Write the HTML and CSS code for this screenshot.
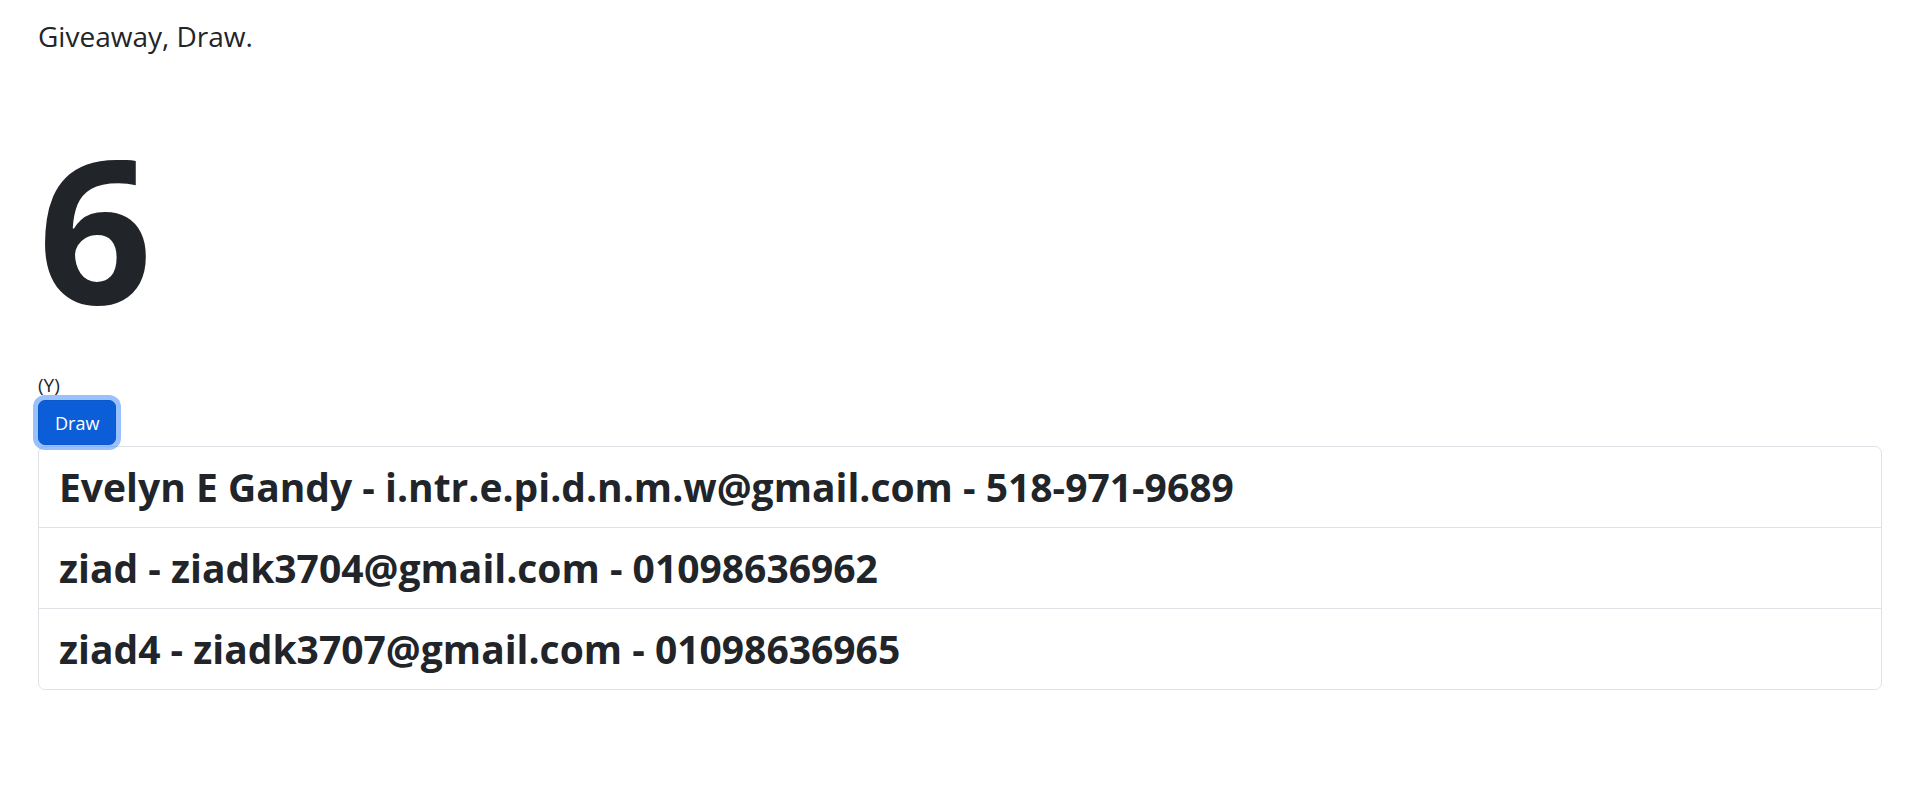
FILE: index.html
```html
<!DOCTYPE html>
<html lang="en">
<head>
<meta charset="utf-8">
<title>Giveaway</title>
<link rel="stylesheet" href="styles.css">
</head>
<body>
<div class="page">
  <div class="title">Giveaway, Draw.</div>
  <div class="count">6</div>
  <div class="hint">(Y)</div>
  <button class="btn-draw" type="button">Draw</button>
  <ul class="entries">
    <li class="entry">Evelyn E Gandy - i.ntr.e.pi.d.n.m.w@gmail.com - 518-971-9689</li>
    <li class="entry">ziad - ziadk3704@gmail.com - 01098636962</li>
    <li class="entry">ziad4 - ziadk3707@gmail.com - 01098636965</li>
  </ul>
</div>
</body>
</html>
```
FILE: styles.css
```css
html, body {
  margin: 0;
  padding: 0;
  background: #fff;
}
body {
  font-family: "Open Sans", "Noto Sans", sans-serif;
  color: #212529;
}
.page {
  padding: 14px 37px 0 38px;
  display: flex;
  flex-direction: column;
  align-items: flex-start;
}
.title {
  font-size: 28px;
  line-height: 45px;
  font-weight: 400;
}
.count {
  margin-top: 68px;
  font-size: 200px;
  line-height: 200px;
  font-weight: 700;
}
.hint {
  margin-top: 47px;
  font-size: 19px;
  line-height: 22px;
}
.btn-draw {
  margin-top: 4px;
  font-family: inherit;
  font-size: 18px;
  line-height: 30px;
  padding: 6.5px 16px;
  border: 1px solid #0a58ca;
  border-radius: 7px;
  background: #0b5ed7;
  color: #fff;
  box-shadow: 0 0 0 5px rgba(49, 132, 253, 0.5);
  position: relative;
  z-index: 1;
}
.entries {
  align-self: stretch;
  list-style: none;
  margin: 1px 0 0;
  padding: 0;
  border: 1px solid #dee2e6;
  border-radius: 7px;
}
.entry {
  padding: 15px 20px;
  font-size: 39px;
  line-height: 50px;
  font-weight: 700;
  border-top: 1px solid #dee2e6;
}
.entry:first-child {
  border-top: 0;
}
```
